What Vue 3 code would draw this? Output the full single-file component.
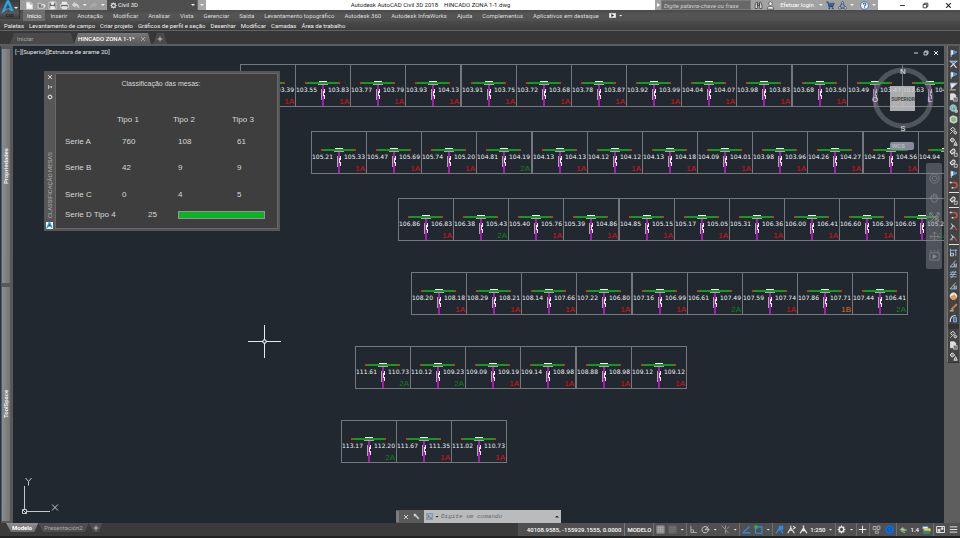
<script setup>
import { h, ref } from 'vue'

const W = '#e4e6e8'
const G = '#b9bcbf'
const B = '#3d8fe0'
const R = '#d0554a'

/* Each glyph is a list of [path, stroke, fill, width] on a 12 x 12 grid. */
const glyphs = {
  newFile: [['M2 1.5h5.5L10 4v6.5H2z', '#d8d8d8', '#f7f7f7'], ['M7 1.5V4h3', '#888', 'none']],
  open: [['M1.5 3h3l1 1.5h4v5h-8z', '#eee', '#777'], ['M5 6.500h6M9 4.500l2 2-2 2', '#f5f5f5', 'none']],
  save: [['M1.500 1.500h9v9h-9z', '#f0f0f0', '#555'], ['M4 1.500h4v3H4zM3.500 7h5v3.500h-5z', '#eee', '#eee']],
  print: [['M3 1.500h6v3H3z', '#eee', '#eee'], ['M1 4.500h10v4H1z', '#f4f4f4', '#666'], ['M3 7.500h6v3H3z', '#eee', '#ddd']],
  undo: [['M5 2L1.500 5 5 8V6.300c3 0 4.500 1 5 3.200 1-3-1-5.800-5-5.800z', '#d5d5d5', '#d5d5d5']],
  redo: [['M7 2l3.500 3L7 8V6.300c-3 0-4.500 1-5 3.200-1-3 1-5.800 5-5.800z', '#a9a9a9', '#a9a9a9']],
  gear: [['M6 2.800a3.200 3.200 0 1 0 .01 0z', W, 'none', 2], ['M6 .8v2M6 9.200v2M.8 6h2M9.200 6h2M2.300 2.300l1.400 1.400M8.300 8.300l1.400 1.400M9.700 2.300L8.300 3.700M3.700 8.300L2.300 9.700', W, 'none', 1.600]],
  logo: [['M4.700 .5h2.300L11 9.500H8.600L5.600 3 3 9.800.5 11z', '#1b86c8', '#1b86c8', .3], ['M5.700.6L1 10.700 6 7.200 9.800 9.400 6.700.6z', '#5cc3ee', '#2a9bd8', .4], ['M5.800 3.800L4.200 7.300l3.400-.4z', '#3f4346', '#3f4346', .2]],
  find: [['M1.500 5.500L3 1.500h1.500V10h-3zM10.500 5.500L9 1.500H7.500V10h3zM4.500 4h3v2h-3z', '#333', '#e9e9e9']],
  user: [['M6 1a2.200 2.600 0 1 0 .01 0z', '#444', '#f4f4f4'], ['M1.500 10.800c.3-3 2-3.500 4.500-3.500s4.200.5 4.500 3.500z', '#444', '#f4f4f4']],
  cart: [['M.5 1.500h2l1.500 6h5.500', '#2d4f7c', 'none', 1.400], ['M3 3h8L9.800 6.500H4z', '#2d4f7c', '#45689a'], ['M4.500 9a.8.8 0 1 0 .01 0zM9 9a.8.8 0 1 0 .01 0z', '#2d4f7c', '#2d4f7c']],
  share: [['M6 1L2 9.500h8z', '#46638d', 'none', 1.500], ['M6 .8a1.500 1.500 0 1 0 .01 0zM2.300 7.500a1.700 1.700 0 1 0 .01 0zM9.700 7.500a1.700 1.700 0 1 0 .01 0z', '#345', '#c8d3e2']],
  help: [['M6 .8a5.200 5.200 0 1 0 .01 0z', '#3d68a8', '#f6f8fb', 1.200], ['M4.300 4.500c0-2.400 3.500-2.200 3.500-.2C7.800 5.700 6 5.600 6 7.200M6 8.400v1.200', '#2456a4', 'none', 1.400]],
  min: [['M2 6h8', 'currentColor', 'none', 1.600]],
  restore: [['M2 4h6v6H2z', 'currentColor', 'none', 1.400], ['M4 4V2h6v6H8', 'currentColor', 'none', 1.400]],
  close: [['M2 2l8 8M10 2l-8 8', 'currentColor', 'none', 1.800]],
  pin: [['M3 2v8M3 6h6M9 4v4', 'currentColor', 'none', 1.400]],
  wrench: [['M1.500 2.500C3 1 5.500 1.500 5.700 4l4.800 5-1.500 1.500-4.600-5C2.500 6 1 4.500 1.500 2.500l2 1.500z', W, '#c9cbcd', .6]],
  prompt: [['M.5 1h11v10H.5z', '#6d7f92', '#9fb2c4'], ['M2.500 3.500L5.500 6l-3 2.500M6.500 8.800h3.500', '#2d4560', 'none', 1.200]],
  flag: [['M3 10.500V2', W, 'none'], ['M3 1.500l7.500 2.700L3 8z', '#b8d5f2', '#e8f2fc'], ['M6 2.500l4.500 1.700L6 6.500z', B, B]],
  flagL: [['M1 1.500h10L6 5.500z', '#c4def7', B], ['M2 9.500l4-4 4 5', W, 'none', 1.500]],
  slash: [['M2 1.500h9L3 9z', '#a9cdf0', '#dceaf8'], ['M1 10.500h8', W, 'none', 1.200]],
  page: [['M2 1h5l2 2v6H2z', W, '#dcdfe1'], ['M6 6h5v5H6z', G, '#777']],
  globe: [['M5.500 1a4.300 4.300 0 1 0 .01 0z', '#cde5ee', '#4fa3bb'], ['M3 3c2-1 3 1 1.500 2S4 8 5.500 9M7 2c-1 2 1 3 2 4', '#d8f0cc', '#73a75b'], ['M8 8h3v3H8z', W, '#999']],
  map: [['M1.500 3l4-2 5 2v6l-4 2-5-2z', W, '#bccfc2'], ['M4 4h4v4H4z', '#6aa557', '#9cc776']],
  node: [['M5 1.500L8 4.500 5 7.500 2 4.500z', W, '#555', 1.300], ['M8.500 7a1.800 1.800 0 1 0 .01 0z', W, '#777', 1.200], ['M1.500 10.500L4 8', G, 'none', 1.200]],
  nodeA: [['M4.500 1L7.500 4 4.500 7l-3-3z', W, '#888', 1.300], ['M6.500 11L8.700 6 11 11zM7.500 9.500h2.500', W, 'none', 1.200]],
  nodeC: [['M5 1.500c3-.5 4 2 2.500 4L4 8 1.500 5z', W, '#6b6f72', 1.400], ['M7 7h4v4H7z', W, '#444', 1]],
  magnet: [['M3 2h4c5 0 5 7 0 7', R, 'none', 2], ['M1 2h2.500M6 9H3.500', W, 'none', 2]],
  redLine: [['M3 2l2 3-2 4M5 5l3 1', W, 'none', 1.300], ['M7 6l3.500 4.500', R, 'none', 1.600], ['M1 9h4', '#7ba9da', 'none', 1.400]],
  frame: [['M2 1v10M1 3h10M9 2v9', '#88b4e5', 'none', 1.300], ['M2 7h4v3.500H2z', W, '#555', 1]],
  angle: [['M1.500 10.500L9 2M1.500 10.500h9', '#91b9e4', 'none', 1.300], ['M7 6v4M9.500 6v4', W, 'none', 1.200]],
  hatch: [['M1 3h9M1 6h9M1 9h9M9 1L3 11M6 1L2 7', '#99bde3', 'none', 1.100]],
  blob: [['M6 1a4.500 4.500 0 1 0 .01 0z', W, '#e8e8e8'], ['M2 7l5-3 3 4-3 2.500z', '#dc8b36', '#e69b48']],
  brush: [['M10.500 1.500L6 6', '#cf8440', 'none', 2.400], ['M5.500 5.500L3 8l3 1.500', '#e59a49', '#e59a49'], ['M1 10.500h5', W, 'none', 1.200]],
  arc: [['M1.500 10.500C1.500 5 4 2 9 2', W, 'none', 1.400], ['M6 4.500h4v6H6z', '#78a9de', '#4878ad', 1.200]],
  grid: [['M1 1h10v10H1z', '#8a8a8a', '#8a8a8a', 1], ['M3.500 1v10M6 1v10M8.500 1v10M1 3.500h10M1 6h10M1 8.500h10', '#b4b4b4', 'none', .6]],
  dots: [['M1 1h10v10H1z', '#646464', '#646464', 1], ['M1.500 3.500h9M1.500 6h9M1.500 8.500h9', '#7a7a7a', 'none', .8]],
  ortho: [['M2.500 1v9h8M2.500 6.500h3.500V10', '#b5b5b5', 'none', 1.100]],
  polar: [['M5.500 2a4.200 4.200 0 1 0 .01 0z', '#c8c8c8', 'none', 1.300], ['M5.500 6.200h6M5.500 6.200L9.500 2', '#c8c8c8', 'none', 1.200]],
  iso: [['M1 1l9.500 10M6 5V.5M6 7v4.500M8 5l3-3', '#a4a4a4', 'none', 1.100]],
  otrack: [['M1 10.500h10M1 10.500L10 2', '#2f8cf0', 'none', 1.500]],
  osnap: [['M2 4v7h8.500V2.500H5', '#2f8cf0', 'none', 1.600], ['M1 1h3.500v3.500H1z', '#35b24a', '#35b24a']],
  annoB: [['M6 1v3M6 4L1.500 11M6 4l4.500 7M3.500 6.500h5M6 3l4-1.500v4z', '#2f8cf0', '#2f8cf0', 1.700]],
  annoR: [['M5 1v3M5 4L1 11M5 4l5 7M3 7h4M8 1.500l3 2-3 2', W, 'none', 1.500]],
  anno: [['M6 .8v3M6 4L1.500 11M6 4l4.500 7M3.800 7.500h4.400', W, 'none', 1.800]],
  plus: [['M6 1v10M1 6h10', W, 'none', 1.400]],
  isolate: [['M1.500 2h4v4h-4zM7 1.500h3.500V6H7zM4.500 8h4v3h-4z', '#b8b8b8', 'none', 1.100]],
  hardware: [['M6 .4a5.600 5.600 0 1 0 .01 0z', '#0a65c9', '#0d73df'], ['M3 7.500L8.500 4.500M6 3a3 3 0 1 0 .01 0z', '#084b97', 'none', 1.200]],
  leaf: [['M1 6.500L5 3l1 2 4.500 1.500L7 8z', '#6ea962', '#a6d19a'], ['M3 8.500l5 1.500', G, 'none', 1.200]],
  flagBR: [['M1 2h7v3.500H1z', '#4a90d9', '#e7f0f8'], ['M3 5h8v3H3z', '#e5c32d', '#f4d83f'], ['M2 8h8v3H2z', '#2aa061', '#3572c5']],
  screen: [['M.8 2h10.500v8H.8z', W, 'none', 1.300], ['M2.500 5.500h3v3h-3zM7 3.500h2.500V6H7z', W, W, .6]],
  menu: [['M1 2.500h10M1 6h10M1 9.500h10', W, 'none', 1.300]],
  camera: [['M.5 2.500h11v7H.5z', W, '#f2f2f2'], ['M4.500 4l3.500 2-3.500 2z', '#333', '#333']],
  wheel: [['M6 1a5 5 0 1 0 .01 0zM6 3.500a2.500 2.500 0 1 0 .01 0z', '#7c8084', 'none', 1]],
  hand: [['M3 7V3M4.800 6V1.500M6.600 6V1.500M8.400 6.500v-4M3 7L1 5.500 4 11h4l1.500-3.500V5', '#7c8084', 'none', 1]],
  zoomX: [['M1 1l10 10M11 1L1 11M1 4V1h3M8 1h3v3M8.500 7a1.800 1.800 0 1 0 .01 0z', '#888c90', 'none', 1]],
  orbit: [['M6 1v10M1 6h10M4 3l2-2 2 2M4 9l2 2 2-2M3 4L1 6l2 2M9 4l2 2-2 2', '#7c8084', 'none', 1]],
  film: [['M1 3h10v8H1zM1 1h2M5 1h2M9 1h2', '#7c8084', 'none', 1], ['M4.500 5l3.500 2-3.500 2z', '#888c90', '#888c90']]
}

const Glyph = (props) =>
  h('svg', { viewBox: '0 0 12 12', 'aria-hidden': 'true' },
    glyphs[props.name].map(([d, stroke, fill, width = 1]) =>
      h('path', { d, stroke, fill, 'stroke-width': width })))
Glyph.props = ['name']

const ribbonTabs = ['Início', 'Inserir', 'Anotação', 'Modificar', 'Analisar', 'Vista', 'Gerenciar', 'Saída',
  'Levantamento topográfico', 'Autodesk 360', 'Autodesk InfraWorks', 'Ajuda', 'Complementos', 'Aplicativos em destaque']
const panels = ['Paletas', 'Levantamento de campo', 'Criar projeto', 'Gráficos de perfil e seção', 'Desenhar',
  'Modificar', 'Camadas', 'Área de trabalho']

const tools = ['flag', 'flagL', 'flag', 'slash', 'page', 'globe', 'map', 'node', 'nodeA', 'nodeC', 'nodeC', 'flag', 'magnet', '-',
  'nodeC', '-', 'magnet', 'redLine', 'redLine', '-', 'frame', 'angle', 'hatch', 'angle', 'blob', 'brush', 'arc', '=',
  'node', 'page', 'nodeA']

const statusGroups = [
  ['grid', 'dots', 'v'],
  ['ortho', 'polar', 'v', 'iso', 'v'],
  ['otrack', 'osnap', 'v'],
  ['annoB', 'annoR', 'anno', '1:250', 'v'],
  ['gear', 'v'],
  ['plus'],
  ['isolate', 'hardware'],
  ['leaf', '1.4', 'flagBR'],
  ['screen', 'menu']
]

const series = [
  ['Serie A', 760, 108, 61],
  ['Serie B', 42, 9, 9],
  ['Serie C', 0, 4, 5]
]

/* A row of tables: "left level, right level, class" per cell, 1A unless given. */
const pitch = 55.15
const row = (x, y, text) => ({
  x,
  y,
  cells: text.split(',').map((c, i) => {
    const [left, right, kind = '1A'] = c.trim().split(' ')
    return { x: x + Math.round(i * pitch), left, right, kind }
  })
})
const rows = [
  row(227, 18, '103.41 103.39, 103.55 103.83, 103.77 103.79, 103.93 104.13, 103.91 103.75, 103.72 103.68, 103.78 103.87, 103.92 103.99, 104.04 104.07, 103.98 103.83, 103.68 103.50, 103.49 103.47, 103.63 104.02'),
  row(298, 85, '105.21 105.33, 105.47 105.69, 105.74 105.20, 104.81 104.19 2A, 104.13 104.13, 104.12 104.12, 104.13 104.18, 104.09 104.01, 103.98 103.96, 104.26 104.27, 104.25 104.56, 104.94 105.10'),
  row(385, 152, '106.86 106.83, 106.38 105.43 2A, 105.40 105.76, 105.39 104.86, 104.85 105.15, 105.17 105.05, 105.31 106.36, 106.00 106.41, 106.60 106.39, 106.05 105.22 2A'),
  row(398, 226, '108.20 108.18, 108.29 108.21, 108.14 107.66, 107.22 106.80, 107.16 106.99, 106.61 107.49 2A, 107.59 107.74, 107.86 107.71 1B, 107.44 106.41 2A'),
  row(342, 300, '111.61 110.73 2A, 110.12 109.23 2A, 109.09 109.19, 109.14 108.98, 108.88 108.98, 109.12 109.12'),
  row(328, 374, '113.17 112.20 2A, 111.67 111.35, 111.02 110.73')
]

const search = ref('')
const command = ref('')
</script>

<template>
  <div class="app">
    <header class="top">
      <button class="logo" aria-label="Menu do aplicativo">
        <Glyph name="logo" class="logo-mark" />
        <span class="logo-text">C3D</span>
        <i class="caret light"></i>
      </button>
      <div class="top-main">
        <div class="titlebar">
          <div class="quick">
            <button v-for="n in ['newFile', 'open', 'save', 'print', 'undo']" :key="n" :aria-label="n"><Glyph :name="n" class="ic" /></button>
            <i class="caret light"></i>
            <button aria-label="redo"><Glyph name="redo" class="ic" /></button>
            <i class="caret light"></i>
          </div>
          <div class="workspace">
            <Glyph name="gear" class="ic small" />
            <select aria-label="Espaço de trabalho"><option>Civil 3D</option></select>
            <i class="caret light"></i>
          </div>
          <button class="customize" aria-label="Personalizar"><i class="caret light"></i></button>
          <div class="title"><span>Autodesk AutoCAD Civil 3D 2018</span><span>HINCADO ZONA 1-1.dwg</span></div>
          <div class="account">
            <i class="play"></i>
            <input v-model="search" class="search" type="text" placeholder="Digite palavra-chave ou frase" aria-label="Pesquisar">
            <button aria-label="Localizar"><Glyph name="find" class="ic" /></button>
            <button class="login"><Glyph name="user" class="ic" /><span>Efetuar login</span><i class="caret light"></i></button>
            <button aria-label="Loja"><Glyph name="cart" class="ic" /></button>
            <button aria-label="Conexões"><Glyph name="share" class="ic" /></button>
            <i class="caret light"></i>
            <button class="help" aria-label="Ajuda"><Glyph name="help" class="ic" /></button>
            <i class="caret light"></i>
          </div>
          <div class="window-buttons">
            <button v-for="n in ['min', 'restore', 'close']" :key="n" :aria-label="n"><Glyph :name="n" class="ic small" /></button>
          </div>
        </div>
        <nav class="ribbon">
          <button v-for="(t, i) in ribbonTabs" :key="t" :class="{ active: i === 0 }">{{ t }}</button>
          <button class="media" aria-label="Mídia"><Glyph name="camera" class="ic small" /><i class="caret light"></i></button>
        </nav>
      </div>
    </header>
    <nav class="panels">
      <button v-for="p in panels" :key="p">{{ p }}</button>
    </nav>
    <nav class="files">
      <button class="file">Iniciar</button>
      <button class="file current"><span>HINCADO ZONA 1-1*</span><Glyph name="close" class="ic tiny" /></button>
      <button class="file add" aria-label="Novo desenho"><Glyph name="plus" class="ic tiny" /></button>
    </nav>

    <main class="work">
      <aside class="dock">
        <button class="dock-tab">Propriedades</button>
        <button class="dock-tab">ToolSpace</button>
      </aside>

      <section class="canvas">
        <svg class="drawing" aria-label="Desenho">
          <g v-for="r in rows" :key="r.y">
            <g v-for="(c, i) in r.cells" :key="i">
              <rect :x="c.x + 0.5" :y="r.y + 0.5" width="55" height="42" class="cell" />
              <path :d="`M${c.x + 10} ${r.y + 19}h35`" class="beam" />
              <path :d="`M${c.x + 10} ${r.y + 19}h2M${c.x + 43} ${r.y + 19}h2`" class="beam-end" />
              <path :d="`M${c.x + 24} ${r.y + 17.5}h8`" class="tick" />
              <path :d="`M${c.x + 23} ${r.y + 20.5}h10`" class="plate" />
              <path :d="`M${c.x + 28} ${r.y + 21}v21`" class="post" />
              <path :d="`M${c.x + 26.5} ${r.y + 25}v11`" class="plate" />
              <path :d="`M${c.x + 29.5} ${r.y + 25}v4M${c.x + 28.5} ${r.y + 27}v5M${c.x + 29.5} ${r.y + 31}v4`" class="tick" />
              <text :x="c.x + 1" :y="r.y + 28" class="level">{{ c.left }}</text>
              <text :x="c.x + 33" :y="r.y + 28" class="level">{{ c.right }}</text>
              <text :x="c.x + 54" :y="r.y + 40" :class="['kind', 'k' + c.kind]">{{ c.kind }}</text>
            </g>
          </g>
          <path class="cross" d="M235 295.500h15M253 295.500h15M251.500 279v15M251.500 297v15M250 294h3v3h-3z" />
          <path class="ucs" d="M11.500 463v-23M14 465.500h23M9.500 463.500h4v4h-4zM9.500 463.500l4 4" />
          <path class="ucs" d="M12.500 432l3 3.500 3-3.500M15.500 435.500v4M39 458.500l6 6M45 458.500l-6 6" />
        </svg>

        <div class="view-label">[−][Superior][Estrutura de arame 2D]</div>
        <div class="view-buttons">
          <button v-for="n in ['min', 'restore', 'close']" :key="n" :aria-label="n"><Glyph :name="n" class="ic tiny" /></button>
        </div>

        <div class="palette">
          <div class="palette-bar">
            <Glyph name="close" class="ic tiny" />
            <Glyph name="pin" class="ic tiny" />
            <Glyph name="gear" class="ic tiny" />
            <span class="palette-title">CLASSIFICAÇÃO MESAS</span>
            <span class="palette-logo"><Glyph name="logo" class="ic small" /></span>
          </div>
          <div class="palette-body">
            <h2>Classificação das mesas:</h2>
            <table>
              <thead><tr><th></th><th>Tipo 1</th><th>Tipo 2</th><th>Tipo 3</th></tr></thead>
              <tbody>
                <tr v-for="s in series" :key="s[0]">
                  <th>{{ s[0] }}</th><td>{{ s[1] }}</td><td>{{ s[2] }}</td><td>{{ s[3] }}</td>
                </tr>
              </tbody>
            </table>
            <div class="serie-d"><span>Serie D Tipo 4</span><span>25</span><i class="bar"></i></div>
          </div>
        </div>

        <svg class="cube" viewBox="0 0 66 72" aria-label="ViewCube">
          <circle cx="33" cy="36" r="28" class="ring" />
          <rect x="20" y="24" width="25" height="25" class="face" />
          <text x="33" y="39" class="face-text">SUPERIOR</text>
          <text x="33" y="12" class="dir">N</text>
          <text x="33" y="69" class="dir">S</text>
          <text x="5" y="40" class="dir">O</text>
          <text x="60" y="40" class="dir">L</text>
        </svg>
        <button class="wcs">WCS</button>
        <div class="navbar">
          <button v-for="n in ['wheel', 'hand', 'zoomX', 'orbit', 'film']" :key="n" :aria-label="n"><Glyph :name="n" class="nav-ic" /></button>
        </div>

        <form class="command" @submit.prevent>
          <i class="grip"></i>
          <button type="button" aria-label="Fechar"><Glyph name="close" class="ic tiny" /></button>
          <button type="button" aria-label="Personalizar"><Glyph name="wrench" class="ic small" /></button>
          <label class="command-field">
            <Glyph name="prompt" class="ic small" /><i class="caret dark"></i>
            <input v-model="command" type="text" placeholder="Digite um comando" aria-label="Comando">
            <i class="caret dark up"></i>
          </label>
        </form>
      </section>

      <aside class="tools">
        <div class="tool-strip">
          <template v-for="(t, i) in tools" :key="i">
            <hr v-if="t === '-'">
            <i v-else-if="t === '='" class="tool-gap"></i>
            <button v-else :aria-label="t"><Glyph :name="t" class="ic" /></button>
          </template>
        </div>
      </aside>
    </main>

    <footer class="bottom">
      <nav class="layouts">
        <button class="layout current">Modelo</button>
        <button class="layout">Presentación2</button>
        <button class="layout add" aria-label="Nova apresentação"><Glyph name="plus" class="ic tiny" /></button>
      </nav>
      <div class="status">
        <span class="coords">40108.9585, -155929.1555, 0.0000</span>
        <button class="space">MODELO</button>
        <div v-for="(g, i) in statusGroups" :key="i" :class="['group', { wide: i > 5 }]">
          <template v-for="(n, j) in g" :key="j">
            <i v-if="n === 'v'" class="slot-caret"><i class="caret light"></i></i>
            <button v-else-if="glyphs[n]" class="slot" :aria-label="n"><Glyph :name="n" class="ic" /></button>
            <button v-else class="slot-text">{{ n }}</button>
          </template>
        </div>
      </div>
    </footer>
  </div>
</template>

<style>
body {
  background: #373737;
}
</style>

<style scoped>
.app {
  display: flex;
  flex-direction: column;
  min-height: 100vh;
  background: #373737;
  color: #dcdcdc;
  font: 6px/8px Roboto, "Open Sans", sans-serif;
  overflow: hidden;
}
.app * { box-sizing: border-box; }
button, input, select {
  margin: 0;
  padding: 0;
  border: 0;
  background: none;
  color: inherit;
  font: inherit;
  appearance: none;
  white-space: nowrap;
}
button { display: flex; align-items: center; }
.ic { display: block; width: 9px; height: 9px; flex: none; }
.ic.small { width: 7px; height: 7px; }
.ic.tiny { width: 6px; height: 6px; }
.caret {
  display: block;
  flex: none;
  width: 4px;
  height: 2px;
  clip-path: polygon(0 0, 100% 0, 50% 100%);
  background: #222;
}
.caret.light { background: #f0f0f0; }
.caret.up { clip-path: polygon(50% 0, 100% 100%, 0 100%); }

/* header */
.top { display: flex; height: 21px; background: #505050; }
.logo {
  position: relative;
  flex-direction: column;
  width: 20px;
  height: 19px;
  background: linear-gradient(#3a3a3a, #575757 70%, #3a3a3a);
  border-right: 1px solid #333;
}
.logo-mark { width: 14px; height: 14px; margin-right: 4px; }
.logo-text { font-size: 4px; line-height: 4px; color: #1c1c1c; font-weight: 700; }
.logo .caret { position: absolute; right: 1px; top: 7px; }
.top-main { flex: 1; min-width: 0; }
.titlebar { display: flex; height: 10px; background: #fff; color: #222; }
.quick {
  display: flex;
  align-items: center;
  justify-content: space-between;
  width: 87px;
  padding: 0 2px 0 5px;
  background: #9b9b9b;
}
.workspace {
  display: flex;
  align-items: center;
  width: 90px;
  padding: 0 2px 0 3px;
  gap: 1px;
  background: #4e4e4e;
  color: #f0f0f0;
}
.workspace select { flex: 1; }
.customize { width: 9px; justify-content: center; background: #a5a5a5; border-left: 1px solid #666; }
.title { flex: 1; display: flex; justify-content: center; align-items: center; gap: 6px; white-space: nowrap; }
.account { display: flex; align-items: center; gap: 3px; width: 223px; padding-right: 2px; background: #a2a2a2; color: #fff; }
.play { width: 3px; height: 4px; margin-left: 2px; background: #fff; clip-path: polygon(0 0, 100% 50%, 0 100%); flex: none; }
.search { width: 90px; height: 10px; padding-left: 2px; background: #686868; border: 1px solid #7d7d7d; font-style: italic; color: #ddd; margin-left: -2px; }
.search::placeholder { color: #d0d0d0; opacity: 1; }
.login { flex: 1; justify-content: space-between; gap: 3px; }
.help { margin-left: 3px; }
.window-buttons { display: flex; align-items: center; justify-content: space-between; width: 82px; padding: 0 8px 0 21px; color: #222; }
.ribbon { display: flex; height: 11px; align-items: stretch; padding-left: 3px; background: linear-gradient(#4a4a4a, #555 40%, #505050); gap: 10px; }
.ribbon .active { padding: 0 4px; margin-right: -5px; background: #6e6e6e; color: #fff; }
.ribbon .media { gap: 3px; }
.panels {
  display: flex;
  height: 10px;
  gap: 5px;
  padding-left: 4px;
  background: linear-gradient(#4b4b4b, #3d3d3d);
  border-bottom: 1px solid #626262;
  color: #f0f0f0;
}
.files {
  display: flex;
  align-items: flex-end;
  height: 15px;
  padding-left: 10px;
  background: #373737;
  border-bottom: 2px solid #5d5d5d;
}
.file {
  width: 64px;
  height: 11px;
  padding-left: 7px;
  background: #4a4a4a;
  color: #a8a8a8;
  clip-path: polygon(4px 0, calc(100% - 3px) 0, 100% 100%, 0 100%);
}
.file.current { width: 77px; justify-content: space-between; padding: 0 5px 0 4px; background: linear-gradient(#777, #5a5a5a); color: #fff; font-weight: 500; }
.file.current .ic { color: #aaa; }
.file.add { width: 14px; margin-left: 2px; padding-left: 4px; color: #ddd; }

/* work area */
.work { flex: 1; display: flex; background: #5e5e5e; }
.dock {
  display: flex;
  flex-direction: column;
  gap: 4px;
  width: 13px;
  padding: 3px 3px 2px 1px;
  border-left: 1px solid #17365c;
  background: #585858;
}
.dock-tab {
  flex: 1;
  justify-content: center;
  writing-mode: vertical-rl;
  transform: rotate(180deg);
  background: linear-gradient(90deg, #747474, #8d8d8d);
  color: #f2f2f2;
  font-weight: 600;
}
.canvas { position: relative; flex: 1; min-width: 0; min-height: 470px; background: #212830; overflow: hidden; }
.drawing { position: absolute; inset: 0; width: 100%; height: 100%; fill: none; }
.cell { stroke: #74787c; }
.beam { stroke: #149a1e; stroke-width: 2; }
.beam-end { stroke: #c03a12; stroke-width: 2; }
.tick { stroke: #f2f2f2; stroke-width: 1; }
.plate { stroke: #a6a9ad; }
.post { stroke: #a41cb0; stroke-width: 2; }
.level { fill: #f0f2f4; font: 6px "DejaVu Sans", sans-serif; }
.kind { font: 8px "Liberation Sans", sans-serif; text-anchor: end; }
.k1A { fill: #e00d14; }
.k2A { fill: #0c821c; }
.k1B { fill: #e8681c; }
.cross { stroke: #e8e8e8; }
.ucs { stroke: #c4c8cc; }
.view-label { position: absolute; left: 2px; top: 2px; color: #e6e6e6; }
.view-buttons { position: absolute; right: 5px; top: 4px; display: flex; gap: 4px; color: #fff; }

.palette {
  position: absolute;
  left: 31px;
  top: 25px;
  display: flex;
  width: 236px;
  height: 160px;
  background: #565656;
  padding: 2px 2px 2px 0;
}
.palette-bar { display: flex; flex-direction: column; align-items: center; gap: 4px; width: 11px; padding-top: 1px; color: #ddd; }
.palette-title { flex: 1; writing-mode: vertical-rl; transform: rotate(180deg); color: #b0b0b0; line-height: 9px; white-space: nowrap; }
.palette-logo { padding: 0; background: #f4f4f4; }
.palette-body { flex: 1; padding: 6px 0 0 9px; border: 1px solid #686868; background: #3e3e3e; color: #d8d8d8; font: 8px/10px "Liberation Sans", sans-serif; }
h2 { margin: 0; padding-right: 20px; text-align: center; font: 7px/8px "Liberation Sans", sans-serif; }
table { width: 100%; margin-top: 22px; border-collapse: collapse; table-layout: fixed; }
th, td { padding: 0; height: 27px; text-align: left; font-weight: 400; }
thead th { height: 20px; }
tbody tr:first-child > * { height: 24px; }
th:first-child, td:first-child { width: 57px; }
th:nth-child(2) { width: 56px; }
th:nth-child(3) { width: 59px; }
thead th { position: relative; right: 5px; }
.serie-d { display: flex; align-items: center; margin-top: 2px; }
.serie-d span:first-child { width: 83px; }
.serie-d span:nth-child(2) { width: 30px; }
.bar { width: 87px; height: 8px; border: 1px solid #9a8f9a; background: #08b424; }

.cube { position: absolute; right: 8px; top: 16px; width: 66px; height: 72px; }
.ring { fill: none; stroke: #777c80; stroke-opacity: .55; stroke-width: 5; }
.face { fill: #c9cbcc; fill-opacity: .82; }
.face-text { fill: #45484a; font: 700 5px Roboto, sans-serif; text-anchor: middle; }
.dir { fill: #bfc3c6; font: 700 8px "Liberation Sans", sans-serif; text-anchor: middle; }
.wcs { position: absolute; right: 30px; top: 96px; width: 24px; height: 8px; padding-left: 2px; border-radius: 2px; background: #868b98; color: #c8ccd4; }
.navbar {
  position: absolute;
  right: 2px;
  top: 117px;
  display: flex;
  flex-direction: column;
  align-items: center;
  justify-content: space-between;
  width: 16px;
  height: 106px;
  padding: 10px 0 8px;
  border-radius: 2px;
  background: rgba(140, 145, 150, .42);
}
.nav-ic { display: block; width: 11px; height: 11px; }

.command { position: absolute; left: 383px; bottom: 0; display: flex; align-items: center; gap: 4px; width: 165px; height: 13px; background: #5b5b5b; }
.grip { width: 3px; height: 11px; background: #7c7c7c; }
.command-field { flex: 1; display: flex; align-items: center; gap: 2px; height: 13px; padding: 0 2px; background: #b9bbbd; }
.command-field input { flex: 1; min-width: 0; font: italic 6px/10px "Liberation Mono", monospace; color: #333; }
.command-field input::placeholder { color: #666; opacity: 1; }

.tools { width: 16px; padding: 0 1px 0 3px; }
.tool-strip { display: flex; flex-direction: column; align-items: center; padding-top: 2px; background: #434343; border-left: 1px solid #757575; border-bottom: 1px solid #333; }
.tool-strip button { height: 11px; }
hr { width: 10px; height: 1px; margin: 1px 0 2px; border: 0; background: #e0e0e0; }
.tool-gap { width: 100%; height: 5px; background: #333; }

/* bottom */
.bottom { display: flex; justify-content: space-between; height: 15px; background: #3a3a3a; border-bottom: 2px solid #222; }
.layouts { display: flex; padding-left: 6px; }
.layout { height: 9px; padding: 0 6px; background: #4e4e4e; color: #a8a8a8; clip-path: polygon(0 0, 100% 0, calc(100% - 4px) 100%, 5px 100%); }
.layout.add { padding: 0 4px; }
.layout.current { background: linear-gradient(#909090, #6c6c6c); color: #fff; font-weight: 700; }
.status { display: flex; height: 13px; background: #505050; color: #fff; font-weight: 500; }
.coords { padding: 2px 3px 0 9px; line-height: 9px; white-space: nowrap; }
.space { padding: 0 2px; border-left: 1px solid #777; }
.group { display: flex; align-items: center; border-left: 1px solid #6f6f6f; }
.slot { width: 12px; height: 13px; justify-content: center; }
.wide .slot { width: 13px; }
.slot-caret { display: flex; justify-content: center; width: 8px; }
.slot-text { padding: 0 1px; }
</style>
